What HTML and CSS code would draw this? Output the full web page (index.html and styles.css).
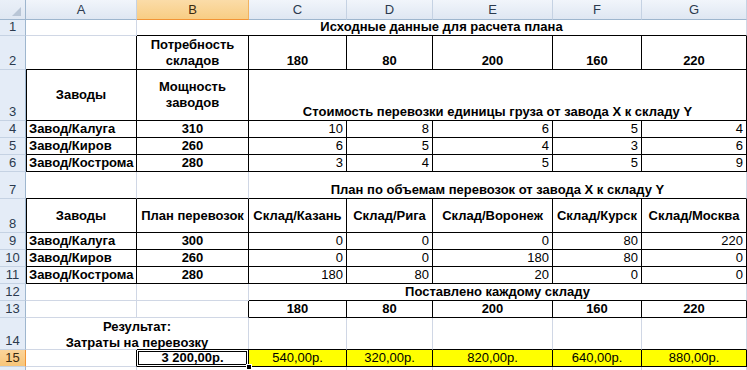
FILE: index.html
```html
<!DOCTYPE html>
<html lang="ru">
<head>
<meta charset="utf-8">
<title>Лист</title>
<link rel="stylesheet" href="styles.css">
</head>
<body>
<div class="sheet">
  <!-- header row -->
  <div class="corner"><svg width="25" height="19" viewBox="0 0 25 19"><polygon points="12,16 21,16 21,7" fill="#b9c6d6"/></svg></div>
  <div class="ch">A</div>
  <div class="ch sel">B</div>
  <div class="ch">C</div>
  <div class="ch">D</div>
  <div class="ch">E</div>
  <div class="ch">F</div>
  <div class="ch">G</div>

  <!-- row 1 -->
  <div class="rh">1</div>
  <div class="c"></div>
  <div class="c s6 bold b">Исходные данные для расчета плана</div>

  <!-- row 2 -->
  <div class="rh">2</div>
  <div class="c r b"></div>
  <div class="c r b bold wrap mid">Потребность складов</div>
  <div class="c r b bold">180</div>
  <div class="c r b bold">80</div>
  <div class="c r b bold">200</div>
  <div class="c r b bold">160</div>
  <div class="c r b bold">220</div>

  <!-- row 3 -->
  <div class="rh">3</div>
  <div class="c l r b bold mid">Заводы</div>
  <div class="c r b bold wrap mid">Мощность заводов</div>
  <div class="c s5 r b bold">Стоимость перевозки единицы груза от завода X к складу Y</div>

  <!-- row 4 -->
  <div class="rh">4</div>
  <div class="c l r b bold left">Завод/Калуга</div>
  <div class="c r b bold">310</div>
  <div class="c r b num">10</div>
  <div class="c r b num">8</div>
  <div class="c r b num">6</div>
  <div class="c r b num">5</div>
  <div class="c r b num">4</div>

  <!-- row 5 -->
  <div class="rh">5</div>
  <div class="c l r b bold left">Завод/Киров</div>
  <div class="c r b bold">260</div>
  <div class="c r b num">6</div>
  <div class="c r b num">5</div>
  <div class="c r b num">4</div>
  <div class="c r b num">3</div>
  <div class="c r b num">6</div>

  <!-- row 6 -->
  <div class="rh">6</div>
  <div class="c l r b bold left">Завод/Кострома</div>
  <div class="c r b bold">280</div>
  <div class="c r b num">3</div>
  <div class="c r b num">4</div>
  <div class="c r b num">5</div>
  <div class="c r b num">5</div>
  <div class="c r b num">9</div>

  <!-- row 7 -->
  <div class="rh">7</div>
  <div class="c b"></div>
  <div class="c b"></div>
  <div class="c s5 b bold">План по объемам перевозок от завода X к складу Y</div>

  <!-- row 8 -->
  <div class="rh">8</div>
  <div class="c l r b bold mid">Заводы</div>
  <div class="c r b bold mid">План перевозок</div>
  <div class="c r b bold mid">Склад/Казань</div>
  <div class="c r b bold mid">Склад/Рига</div>
  <div class="c r b bold mid">Склад/Воронеж</div>
  <div class="c r b bold mid">Склад/Курск</div>
  <div class="c r b bold mid">Склад/Москва</div>

  <!-- row 9 -->
  <div class="rh">9</div>
  <div class="c l r b bold left">Завод/Калуга</div>
  <div class="c r b bold">300</div>
  <div class="c r b num">0</div>
  <div class="c r b num">0</div>
  <div class="c r b num">0</div>
  <div class="c r b num">80</div>
  <div class="c r b num">220</div>

  <!-- row 10 -->
  <div class="rh">10</div>
  <div class="c l r b bold left">Завод/Киров</div>
  <div class="c r b bold">260</div>
  <div class="c r b num">0</div>
  <div class="c r b num">0</div>
  <div class="c r b num">180</div>
  <div class="c r b num">80</div>
  <div class="c r b num">0</div>

  <!-- row 11 -->
  <div class="rh">11</div>
  <div class="c l r b bold left">Завод/Кострома</div>
  <div class="c r b bold">280</div>
  <div class="c r b num">180</div>
  <div class="c r b num">80</div>
  <div class="c r b num">20</div>
  <div class="c r b num">0</div>
  <div class="c r b num">0</div>

  <!-- row 12 -->
  <div class="rh">12</div>
  <div class="c"></div>
  <div class="c"></div>
  <div class="c s5 b bold">Поставлено каждому складу</div>

  <!-- row 13 -->
  <div class="rh">13</div>
  <div class="c"></div>
  <div class="c r"></div>
  <div class="c r b bold">180</div>
  <div class="c r b bold">80</div>
  <div class="c r b bold">200</div>
  <div class="c r b bold">160</div>
  <div class="c r b bold">220</div>

  <!-- row 14 -->
  <div class="rh">14</div>
  <div class="c s2 bold"><span class="lines">Результат:<br>Затраты на перевозку</span></div>
  <div class="c b"></div>
  <div class="c b"></div>
  <div class="c b"></div>
  <div class="c b"></div>
  <div class="c b"></div>

  <!-- row 15 -->
  <div class="rh sel">15</div>
  <div class="c r"></div>
  <div class="c r b bold active">3 200,00р.<span class="handle"></span></div>
  <div class="c r b yellow">540,00р.</div>
  <div class="c r b yellow">320,00р.</div>
  <div class="c r b yellow">820,00р.</div>
  <div class="c r b yellow">640,00р.</div>
  <div class="c r b yellow">880,00р.</div>

  <!-- row 16 (partly visible) -->
  <div class="rh"></div>
  <div class="c"></div>
  <div class="c"></div>
  <div class="c"></div>
  <div class="c"></div>
  <div class="c"></div>
  <div class="c"></div>
  <div class="c"></div>
</div>
</body>
</html>
```

FILE: styles.css
```css
* {
  box-sizing: border-box;
}

html,
body {
  margin: 0;
  padding: 0;
  background: #fff;
  overflow: hidden;
}

body {
  width: 747px;
  height: 370px;
  font-family: "Liberation Sans", Arial, sans-serif;
  font-size: 13px;
  color: #000;
}

.sheet {
  display: grid;
  grid-template-columns: 26px 111px 112px 98px 86px 120px 89px 105px;
  grid-template-rows: 20px 16px 34px 51px 17px 17px 17px 27px 34px 17px 17px 17px 17px 17px 32px 17px 17px;
}

.corner {
  background: linear-gradient(#eaf0f8, #dfe7f2);
  border-right: 1px solid #9eb6ce;
  border-bottom: 1px solid #9eb6ce;
}

.corner svg {
  display: block;
}

.ch {
  background: linear-gradient(#f1f5fb, #dfe7f2);
  border-right: 1px solid #c5d2e3;
  border-bottom: 1px solid #9eb6ce;
  display: flex;
  align-items: center;
  justify-content: center;
  line-height: 16px;
  color: #2b3a4e;
}

.ch.sel {
  background: linear-gradient(#fbdca8, #f8cd84);
  border-right: 1px solid #f2b25e;
  border-bottom: 1px solid #f29436;
  color: #3a2a10;
}

.rh {
  background: #e4ecf7;
  border-right: 1px solid #9eb6ce;
  border-bottom: 1px solid #c5d2e3;
  display: flex;
  align-items: flex-end;
  justify-content: center;
  line-height: 16px;
  color: #2b3a4e;
}

.rh.sel {
  background: linear-gradient(#fbd49a, #f7c57a);
  border-right: 1px solid #f29436;
  color: #3a2a10;
}

.c {
  border-right: 1px solid #d0d7e5;
  border-bottom: 1px solid #d0d7e5;
  display: flex;
  align-items: flex-end;
  justify-content: center;
  text-align: center;
  padding: 0 3px;
  line-height: 16px;
  white-space: nowrap;
  min-width: 0;
}

.s2 { grid-column: span 2; }
.s5 { grid-column: span 5; }
.s6 { grid-column: span 6; }

.r { border-right-color: #000; }
.b { border-bottom-color: #000; }
.l { border-left: 1px solid #000; padding-left: 2px; }

.bold { font-weight: bold; }
.mid { align-items: center; }
.left { justify-content: flex-start; }
.num { justify-content: flex-end; }
.wrap { white-space: normal; }

.lines {
  margin-bottom: -2px;
}

.yellow {
  background: #ffff00;
}

.active {
  position: relative;
  box-shadow: 0 -1px 0 #000, inset 0 0 0 1px #fff, inset 0 0 0 2px #000;
}

.handle {
  position: absolute;
  right: -4px;
  bottom: -4px;
  width: 6px;
  height: 6px;
  background: #000;
  border: 1px solid #fff;
}
```
